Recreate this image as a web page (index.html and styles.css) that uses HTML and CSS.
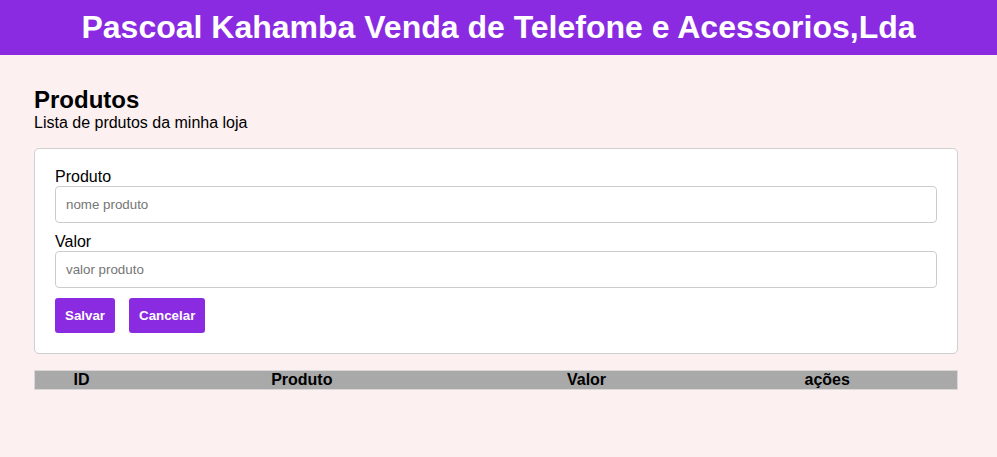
FILE: index.html
```html
<!DOCTYPE html>
<html lang="pt">
<head>
<meta charset="utf-8">
<title>Produtos</title>
<link rel="stylesheet" href="styles.css">
</head>
<body>
<header class="topbar">
  <h1 class="topbar-title">Pascoal Kahamba Venda de Telefone e Acessorios,Lda</h1>
</header>
<main class="page">
  <h2 class="page-title">Produtos</h2>
  <p class="page-sub">Lista de prdutos da minha loja</p>
  <form class="card">
    <label class="field-label" for="produto">Produto</label>
    <input class="field-input" id="produto" type="text" placeholder="nome produto">
    <label class="field-label" for="valor">Valor</label>
    <input class="field-input" id="valor" type="text" placeholder="valor produto">
    <div class="actions">
      <button type="button" class="btn">Salvar</button>
      <button type="button" class="btn">Cancelar</button>
    </div>
  </form>
  <table class="table">
    <thead>
      <tr>
        <th>ID</th>
        <th>Produto</th>
        <th>Valor</th>
        <th>ações</th>
      </tr>
    </thead>
    <tbody></tbody>
  </table>
</main>
</body>
</html>
```

FILE: styles.css
```css
* { box-sizing: border-box; }
html, body {
  margin: 0;
  padding: 0;
  background: #fdf0f0;
  font-family: "Liberation Sans", Arial, sans-serif;
  color: #000;
}
.topbar {
  background: #8a2be2;
  height: 55px;
  display: flex;
  align-items: center;
  justify-content: center;
}
.topbar-title {
  margin: 0;
  color: #fff;
  font-size: 32px;
  font-weight: bold;
  line-height: 37px;
}
.page {
  padding: 31px 39px 0 34px;
}
.page-title {
  margin: 0;
  font-size: 24px;
  font-weight: bold;
  line-height: 28px;
}
.page-sub {
  margin: 0;
  font-size: 16px;
  line-height: 18px;
}
.card {
  margin-top: 16px;
  background: #fff;
  border: 1px solid #cfcfcf;
  border-radius: 5px;
  padding: 19px 20px 20px;
  display: flex;
  flex-direction: column;
}
.field-label {
  font-size: 16px;
  line-height: 18px;
}
.field-input {
  width: 100%;
  height: 37px;
  border: 1px solid #ccc;
  border-radius: 4px;
  padding: 0 10px;
  font-family: "Liberation Sans", Arial, sans-serif;
  font-size: 13.33px;
  margin-bottom: 10px;
  background: #fff;
}
.field-input::placeholder {
  color: #757575;
}
.actions {
  display: flex;
  gap: 14px;
}
.btn {
  background: #8a2be2;
  color: #fff;
  border: none;
  border-radius: 3px;
  height: 35px;
  padding: 0 10px;
  font-family: "Liberation Sans", Arial, sans-serif;
  font-size: 13.33px;
  font-weight: bold;
}
.table {
  margin-top: 16px;
  width: 100%;
  border-collapse: collapse;
  border: 1px solid #d8d8d8;
  background: #a9a9a9;
}
.table th {
  padding: 0;
  height: 19px;
  font-size: 16px;
  line-height: 18px;
  font-weight: bold;
  text-align: center;
}
```
